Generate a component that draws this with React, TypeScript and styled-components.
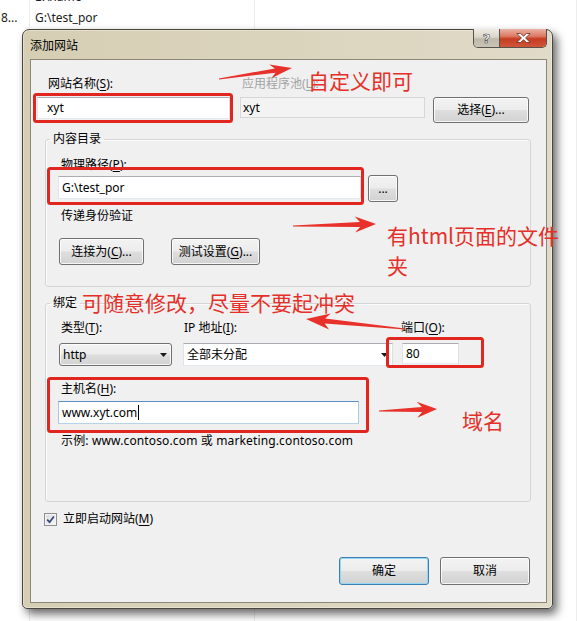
import React from "react";
import styled, { createGlobalStyle } from "styled-components";

const UI = `"Noto Sans", "Noto Sans CJK SC", sans-serif`;
const CJK = `"Noto Sans CJK SC", sans-serif`;
const RED = "#e5302a";

const Global = createGlobalStyle`
  html, body { margin: 0; padding: 0; background: #fff; }
  body { width: 577px; height: 621px; overflow: hidden; }
  *, *::before, *::after { box-sizing: border-box; }
`;

const Desktop = styled.div`
  position: relative;
  width: 577px;
  height: 621px;
  overflow: hidden;
  background: #fff;
  font-family: ${UI};
  font-size: 12px;
  line-height: 16px;
  color: #000;
`;

/* ---------- background list ---------- */
const BgList = styled.div`
  display: flex;
  height: 660px;
  margin-top: -14px;
`;
const BgCol = styled.div<{ $w?: number; $pad: number }>`
  width: ${(p) => (p.$w ? `${p.$w}px` : "auto")};
  flex: ${(p) => (p.$w ? "none" : "1")};
  padding-left: ${(p) => p.$pad}px;
  border-right: 1px solid #ededed;
`;
const BgCell = styled.div`
  height: 21px;
  line-height: 21px;
  font-size: 12px;
  color: #1a1a1a;
  white-space: nowrap;
  overflow: hidden;
`;

/* ---------- window ---------- */
const Window = styled.div`
  position: absolute;
  left: 22px;
  top: 29px;
  width: 531px;
  height: 580px;
  border: 1px solid #4a463c;
  border-radius: 7px 7px 5px 5px;
  background: linear-gradient(to right, #d6ceb3 0%, #dcd5bf 60%, #e0dac8 100%);
  box-shadow: 4px 5px 10px rgba(0, 0, 0, 0.6), inset 0 0 0 1px rgba(255, 255, 255, 0.35);
  display: flex;
  flex-direction: column;
`;

const TitleBar = styled.div`
  height: 29px;
  display: flex;
  align-items: flex-start;
  justify-content: space-between;
  padding: 0 5px 0 7px;
  flex: none;
`;

const Title = styled.div`
  align-self: center;
  font-family: ${CJK};
  font-size: 12px;
  line-height: 16px;
  color: #000;
`;

const CaptionGroup = styled.div`
  display: flex;
  margin-top: -1px;
  height: 19px;
  border: 1px solid #57534a;
  border-top: none;
  border-radius: 0 0 5px 5px;
  overflow: hidden;
`;

const CapBtn = styled.div<{ $close?: boolean }>`
  width: ${(p) => (p.$close ? 47 : 25)}px;
  height: 100%;
  display: flex;
  align-items: center;
  justify-content: center;
  background: ${(p) =>
    p.$close
      ? "linear-gradient(#eab3a5 0%, #dc7a63 40%, #c63c20 55%, #d0553a 100%)"
      : "linear-gradient(#efece4 0%, #d9d5c9 45%, #bdb8aa 55%, #c9c4b6 100%)"};
  & + & {
    border-left: 1px solid #57534a;
  }
`;

const HelpGlyph = styled.span`
  font-family: "DejaVu Sans", sans-serif;
  font-weight: bold;
  font-size: 13px;
  line-height: 13px;
  color: #fff;
  -webkit-text-stroke: 0.6px #4a4a4a;
`;

const Client = styled.div`
  margin: 0 5px 0 7px;
  height: 544px;
  border: 1px solid #8c8878;
  background: #f0f0f0;
  padding-top: 16px;
  display: flex;
  flex-direction: column;
  flex: none;
`;

/* ---------- controls ---------- */
const Row = styled.div<{ $ml?: number; $mt?: number; $gap?: number }>`
  display: flex;
  align-items: flex-start;
  margin-left: ${(p) => p.$ml ?? 0}px;
  margin-top: ${(p) => p.$mt ?? 0}px;
  gap: ${(p) => p.$gap ?? 0}px;
`;

const Field = styled.div<{ $w: number; $ml?: number; $gap: number }>`
  width: ${(p) => p.$w}px;
  margin-left: ${(p) => p.$ml ?? 0}px;
  display: flex;
  flex-direction: column;
  gap: ${(p) => p.$gap}px;
  flex: none;
`;

const Label = styled.div<{ $indent?: number; $mt?: number; $disabled?: boolean; $track?: number }>`
  height: 16px;
  line-height: 16px;
  padding-left: ${(p) => p.$indent ?? 0}px;
  margin-top: ${(p) => p.$mt ?? 0}px;
  letter-spacing: ${(p) => p.$track ?? 0}px;
  color: ${(p) => (p.$disabled ? "#a3a3a3" : "#000")};
  white-space: nowrap;
`;

const Key = styled.u`
  text-underline-offset: 2px;
`;

const TextBox = styled.div<{
  $w: number;
  $h: number;
  $pad?: number;
  $ml?: number;
  $mt?: number;
  $readonly?: boolean;
  $focus?: boolean;
}>`
  width: ${(p) => p.$w}px;
  height: ${(p) => p.$h}px;
  margin-left: ${(p) => p.$ml ?? 0}px;
  margin-top: ${(p) => p.$mt ?? 0}px;
  padding-left: ${(p) => p.$pad ?? 3}px;
  display: flex;
  align-items: center;
  flex: none;
  background: ${(p) => (p.$readonly ? "#f3f3f3" : "#fff")};
  border: 1px solid;
  border-color: ${(p) =>
    p.$readonly
      ? "#d7d7d7"
      : p.$focus
      ? "#5b8fbf #a9c8e4 #b7d3ea #a9c8e4"
      : "#abadb3 #dbdfe6 #e3e9ef #e2e3ea"};
  white-space: nowrap;
`;

const Caret = styled.span`
  display: inline-block;
  width: 1px;
  height: 15px;
  background: #000;
  margin-left: 1px;
`;

const Btn = styled.div<{ $w: number; $h: number; $default?: boolean; $ml?: number }>`
  width: ${(p) => p.$w}px;
  height: ${(p) => p.$h}px;
  margin-left: ${(p) => p.$ml ?? 0}px;
  flex: none;
  display: flex;
  align-items: center;
  justify-content: center;
  border: 1px solid ${(p) => (p.$default ? "#3c7fb1" : "#707070")};
  border-radius: 3px;
  background: linear-gradient(#f3f3f3 0%, #ececec 48%, #dedede 52%, #d2d2d2 100%);
  box-shadow: inset 0 0 0 1px ${(p) => (p.$default ? "#94d7f5" : "rgba(255,255,255,0.8)")};
  white-space: nowrap;
  color: #000;
`;

const DropList = styled.div<{ $w: number; $ml?: number }>`
  width: ${(p) => p.$w}px;
  height: 23px;
  margin-left: ${(p) => p.$ml ?? 0}px;
  display: flex;
  align-items: center;
  justify-content: space-between;
  padding: 0 4px 0 3px;
  border: 1px solid #707070;
  border-radius: 3px;
  background: linear-gradient(#f3f3f3 0%, #ececec 48%, #dedede 52%, #d2d2d2 100%);
  box-shadow: inset 0 0 0 1px rgba(255, 255, 255, 0.8);
`;

const Combo = styled.div<{ $w: number }>`
  width: ${(p) => p.$w}px;
  height: 23px;
  display: flex;
  align-items: center;
  justify-content: space-between;
  padding: 0 4px 0 3px;
  background: #fff;
  border: 1px solid;
  border-color: #abadb3 #dbdfe6 #e3e9ef #e2e3ea;
`;

const Group = styled.fieldset<{ $mt: number; $pt: number; $pb: number }>`
  margin: ${(p) => p.$mt}px 0 0 14px;
  width: 486px;
  min-width: 0;
  padding: ${(p) => p.$pt}px 12px ${(p) => p.$pb}px 12px;
  border: 1px solid #d5d5d5;
  border-radius: 3px;
  box-shadow: inset 1px 1px 0 #fbfbfb;
`;

const Legend = styled.legend`
  padding: 0 3px;
  margin-left: -8px;
  line-height: 16px;
  font-size: 12px;
`;

const CheckRow = styled.div`
  display: flex;
  align-items: center;
  gap: 6px;
  margin: 9px 0 0 13px;
  height: 16px;
`;

const CheckBox = styled.div`
  width: 13px;
  height: 13px;
  border: 1px solid #8e8f8f;
  background: linear-gradient(135deg, #d9dbe0 0%, #f7f7f7 100%);
  box-shadow: inset 0 0 0 1px #f4f4f4;
  display: flex;
  align-items: center;
  justify-content: center;
`;

const Footer = styled.div`
  display: flex;
  justify-content: flex-end;
  gap: 11px;
  margin-top: 30px;
  padding-right: 16px;
`;

/* ---------- annotations overlay ---------- */
const Overlay = styled.svg`
  position: absolute;
  left: 0;
  top: 0;
  width: 577px;
  height: 621px;
  pointer-events: none;
`;

const Note = styled.div<{ $x: number; $y: number }>`
  position: absolute;
  left: ${(p) => p.$x}px;
  top: ${(p) => p.$y}px;
  font-family: ${CJK};
  font-size: 21px;
  line-height: 30px;
  color: ${RED};
  white-space: nowrap;
  pointer-events: none;
`;

function arrow(
  x1: number,
  y1: number,
  x2: number,
  y2: number,
  headLen: number,
  headHalf: number,
  neck = 2.2,
  tail = 0.6
) {
  const dx = x2 - x1;
  const dy = y2 - y1;
  const L = Math.hypot(dx, dy);
  const ux = dx / L;
  const uy = dy / L;
  const nx = -uy;
  const ny = ux;
  const bx = x2 - ux * headLen;
  const by = y2 - uy * headLen;
  const p = (x: number, y: number) => `${x.toFixed(1)},${y.toFixed(1)}`;
  return [
    p(x1 + nx * tail, y1 + ny * tail),
    p(bx + ux * 3 + nx * neck, by + uy * 3 + ny * neck),
    p(bx - ux * 2 + nx * headHalf, by - uy * 2 + ny * headHalf),
    p(x2, y2),
    p(bx - ux * 2 - nx * headHalf, by - uy * 2 - ny * headHalf),
    p(bx + ux * 3 - nx * neck, by + uy * 3 - ny * neck),
    p(x1 - nx * tail, y1 - ny * tail),
  ].join(" ");
}

const DownArrow = () => (
  <svg width="7" height="4" viewBox="0 0 7 4">
    <path d="M0 0 H7 L3.5 4 Z" fill="#1a1a1a" />
  </svg>
);

export default function App() {
  return (
    <>
      <Global />
      <Desktop>
        <BgList>
          <BgCol $w={30} $pad={1}>
            <BgCell />
            <BgCell>8...</BgCell>
          </BgCol>
          <BgCol $w={225} $pad={5}>
            <BgCell>E:\name</BgCell>
            <BgCell>G:\test_por</BgCell>
          </BgCol>
          <BgCol $pad={5} />
        </BgList>

        <Window>
          <TitleBar>
            <Title>添加网站</Title>
            <CaptionGroup>
              <CapBtn>
                <HelpGlyph>?</HelpGlyph>
              </CapBtn>
              <CapBtn $close>
                <svg width="15" height="10" viewBox="0 0 15 10">
                  <path
                    d="M0.8 0.5 H4.6 L7.5 3.2 L10.4 0.5 H14.2 L9.6 5 L14.2 9.5 H10.4 L7.5 6.8 L4.6 9.5 H0.8 L5.4 5 Z"
                    fill="#fff"
                    stroke="#6e2a1c"
                    strokeWidth="0.8"
                  />
                </svg>
              </CapBtn>
            </CaptionGroup>
          </TitleBar>

          <Client>
            <Row $ml={6}>
              <Field $w={193} $gap={5}>
                <Label $indent={11}>
                  网站名称(<Key>S</Key>):
                </Label>
                <TextBox $w={193} $h={22} $pad={9}>
                  xyt
                </TextBox>
              </Field>
              <Field $w={185} $ml={10} $gap={5}>
                <Label $indent={2} $disabled>
                  应用程序池(<Key>L</Key>):
                </Label>
                <TextBox $w={185} $h={21} $pad={2} $readonly>
                  xyt
                </TextBox>
              </Field>
              <Field $w={96} $ml={8} $gap={5}>
                <Label />
                <Btn $w={96} $h={26}>
                  选择(<Key>E</Key>)...
                </Btn>
              </Field>
            </Row>

            <Group $mt={8} $pt={10} $pb={21}>
              <Legend>内容目录</Legend>
              <Label $indent={3}>
                物理路径(<Key>P</Key>):
              </Label>
              <Row $mt={2} $gap={7}>
                <TextBox $w={303} $h={23} $mt={1}>
                  G:\test_por
                </TextBox>
                <Btn $w={30} $h={27}>
                  ...
                </Btn>
              </Row>
              <Label $indent={3} $mt={6}>
                传递身份验证
              </Label>
              <Row $mt={14} $ml={1} $gap={27}>
                <Btn $w={85} $h={27}>
                  连接为(<Key>C</Key>)...
                </Btn>
                <Btn $w={89} $h={27}>
                  测试设置(<Key>G</Key>)...
                </Btn>
              </Row>
            </Group>

            <Group $mt={8} $pt={9} $pb={52}>
              <Legend>绑定</Legend>
              <Row>
                <Field $w={114} $gap={7}>
                  <Label $indent={3}>
                    类型(<Key>T</Key>):
                  </Label>
                  <DropList $w={113} $ml={1}>
                    <span>http</span>
                    <DownArrow />
                  </DropList>
                </Field>
                <Field $w={210} $ml={11} $gap={7}>
                  <Label $indent={1}>
                    IP 地址(<Key>I</Key>):
                  </Label>
                  <Combo $w={210}>
                    <span>全部未分配</span>
                    <DownArrow />
                  </Combo>
                </Field>
                <Field $w={58} $ml={8} $gap={7}>
                  <Label>
                    端口(<Key>O</Key>):
                  </Label>
                  <TextBox $w={57} $h={21} $ml={1}>
                    80
                  </TextBox>
                </Field>
              </Row>
              <Label $indent={3} $mt={15}>
                主机名(<Key>H</Key>):
              </Label>
              <TextBox $w={301} $h={23} $mt={4} $focus>
                www.xyt.com
                <Caret />
              </TextBox>
              <Label $indent={3} $mt={9} $track={0.14}>
                示例: www.contoso.com 或 marketing.contoso.com
              </Label>
            </Group>

            <CheckRow>
              <CheckBox>
                <svg width="9" height="9" viewBox="0 0 9 9">
                  <path d="M1.2 4.6 L3.6 7.2 L7.9 1.4" fill="none" stroke="#33477a" strokeWidth="1.7" />
                </svg>
              </CheckBox>
              <span>
                立即启动网站(<Key>M</Key>)
              </span>
            </CheckRow>

            <Footer>
              <Btn $w={90} $h={28} $default>
                确定
              </Btn>
              <Btn $w={90} $h={28}>
                取消
              </Btn>
            </Footer>
          </Client>
        </Window>

        <Overlay viewBox="0 0 577 621">
          <g fill="none" stroke="#e1261f" strokeWidth="3">
            <rect x="34.5" y="94.5" width="197" height="27" rx="2" />
            <rect x="48.5" y="168.5" width="314" height="35" rx="2" />
            <rect x="387.5" y="338.5" width="95" height="28" rx="2" />
            <rect x="48.5" y="378.5" width="319" height="53" rx="2" />
          </g>
          <g fill="#e8312a">
            <polygon points={arrow(219, 79, 292, 68, 20, 7)} />
            <polygon points={arrow(293, 226, 376, 224, 19, 8, 2.5)} />
            <polygon points={arrow(405, 329, 306, 319, 22, 8, 2.5)} />
            <polygon points={arrow(379, 411, 437, 409, 18, 8, 2.5)} />
          </g>
        </Overlay>
        <Note $x={308} $y={65}>自定义即可</Note>
        <Note $x={387} $y={220}>
          有html页面的文件
          <br />夹
        </Note>
        <Note $x={82} $y={287}>可随意修改，尽量不要起冲突</Note>
        <Note $x={462} $y={405}>域名</Note>
      </Desktop>
    </>
  );
}
